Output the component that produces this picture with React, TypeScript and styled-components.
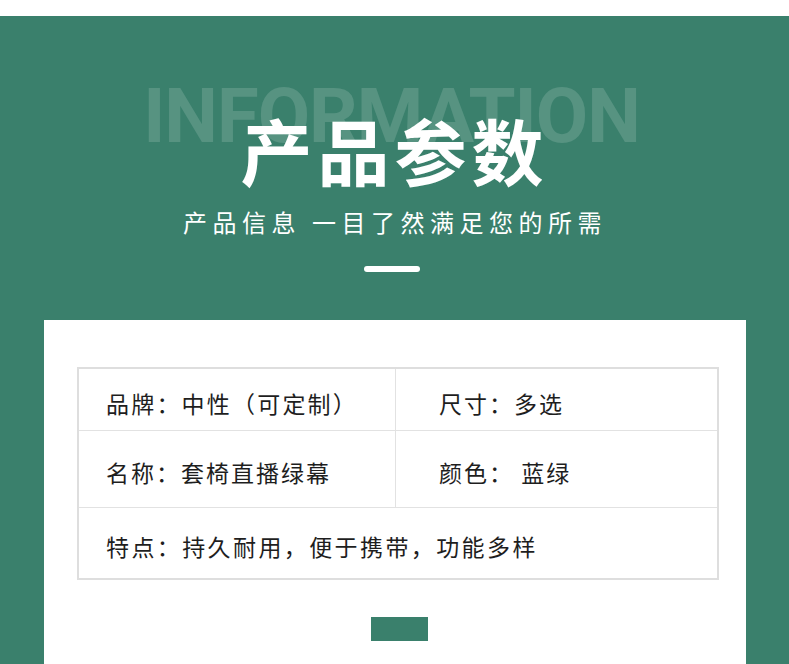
import styled, { createGlobalStyle } from "styled-components";

const GlobalStyle = createGlobalStyle`
  body {
    margin: 0;
    background: #ffffff;
    font-family: "Noto Sans CJK SC", "Noto Sans", sans-serif;
  }
`;

const rows = [
  [
    { text: "品牌：中性（可定制）", spacing: 2.2 },
    { text: "尺寸：多选", spacing: 2 },
  ],
  [
    { text: "名称：套椅直播绿幕", spacing: 2 },
    { text: "颜色： 蓝绿", spacing: 2 },
  ],
];

export default function App() {
  return (
    <>
      <GlobalStyle />
      <Page>
        <Banner>
          <TitleStack>
            <Ghost>INFORMATION</Ghost>
            <Title>产品参数</Title>
          </TitleStack>
          <Subtitle>产品信息 一目了然满足您的所需</Subtitle>
          <Bar />
          <Card>
            <Column>
              <Table>
                {rows.map((row, i) => (
                  <Row key={i} $height={i === 0 ? 61 : 76}>
                    <Cell $pad={27} $divider>
                      <CellText $spacing={row[0].spacing}>{row[0].text}</CellText>
                    </Cell>
                    <Cell $pad={43}>
                      <CellText $spacing={row[1].spacing}>{row[1].text}</CellText>
                    </Cell>
                  </Row>
                ))}
                <Row $height={70} $last>
                  <Cell $pad={27} $wide>
                    <CellText $spacing={2.4}>特点：持久耐用，便于携带，功能多样</CellText>
                  </Cell>
                </Row>
              </Table>
              <Marker />
            </Column>
          </Card>
        </Banner>
      </Page>
    </>
  );
}

const Page = styled.div`
  padding-top: 16px;
  height: 648px;
  overflow: hidden;
`;

const Banner = styled.section`
  background: #3a806c;
  padding-top: 62px;
  min-height: 600px;
  display: flex;
  flex-direction: column;
  align-items: center;
`;

const TitleStack = styled.div`
  display: grid;
  justify-items: center;
  width: 100%;

  & > * {
    grid-area: 1 / 1;
  }
`;

const Ghost = styled.div`
  font-family: Roboto, "Liberation Sans", sans-serif;
  font-weight: 700;
  font-size: 76px;
  line-height: 1;
  letter-spacing: -1px;
  color: rgba(255, 255, 255, 0.15);
  margin-right: 6px;
`;

const Title = styled.h1`
  margin: 35px 0 0;
  font-size: 72px;
  line-height: 1;
  font-weight: 700;
  color: #ffffff;
  letter-spacing: 5px;
`;

const Subtitle = styled.div`
  margin-top: 25px;
  font-size: 24px;
  line-height: 1;
  font-weight: 400;
  color: #ffffff;
  letter-spacing: 5.5px;
  margin-right: -1px;
`;

const Bar = styled.div`
  margin-top: 32px;
  width: 56px;
  height: 6px;
  border-radius: 3px;
  background: #ffffff;
  margin-left: -6px;
`;

const Card = styled.div`
  align-self: stretch;
  margin: 48px 43px 0 44px;
  background: #ffffff;
  padding: 47px 0 40px 33px;
`;

const Column = styled.div`
  width: 642px;
  display: flex;
  flex-direction: column;
  align-items: center;
`;

const Table = styled.div`
  width: 100%;
  box-sizing: border-box;
  border: 2px solid #dedede;
`;

const Row = styled.div<{ $height: number; $last?: boolean }>`
  display: grid;
  grid-template-columns: 317px 1fr;
  height: ${(p) => p.$height}px;
  border-bottom: ${(p) => (p.$last ? "none" : "1px solid #e2e2e2")};
`;

const Cell = styled.div<{ $pad: number; $divider?: boolean; $wide?: boolean }>`
  display: flex;
  align-items: center;
  padding: 7px 0 0 ${(p) => p.$pad}px;
  border-right: ${(p) => (p.$divider ? "1px solid #e2e2e2" : "none")};
  grid-column: ${(p) => (p.$wide ? "1 / -1" : "auto")};
`;

const CellText = styled.span<{ $spacing: number }>`
  font-size: 23px;
  line-height: 1;
  color: #1e1e1e;
  letter-spacing: ${(p) => p.$spacing}px;
  white-space: nowrap;
`;

const Marker = styled.div`
  margin-top: 37px;
  width: 57px;
  height: 24px;
  background: #3a806c;
  margin-left: 3px;
`;
